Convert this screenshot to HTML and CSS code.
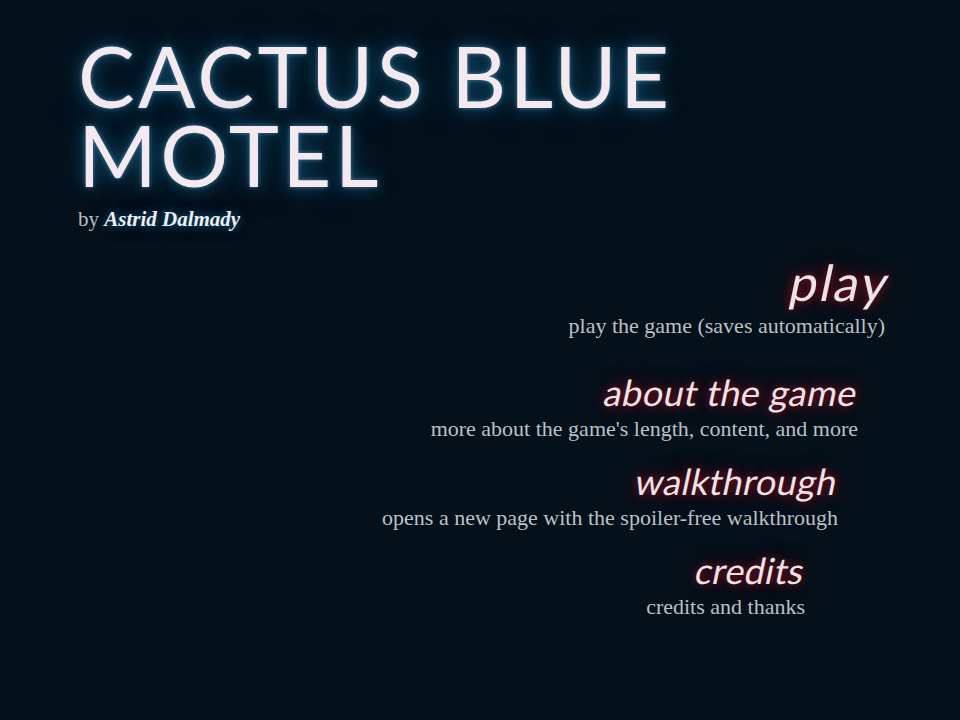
FILE: index.html
```html
<!DOCTYPE html>
<html lang="en">
<head>
<meta charset="utf-8">
<title>Cactus Blue Motel</title>
<link rel="stylesheet" href="styles.css">
</head>
<body>
<div class="page">
  <header class="masthead">
    <h1 class="title">CACTUS BLUE<br>MOTEL</h1>
    <p class="byline">by <em class="author">Astrid Dalmady</em></p>
  </header>
  <nav class="menu">
    <div class="item item-play">
      <a class="item-title title-big" href="#">play</a>
      <p class="item-desc">play the game (saves automatically)</p>
    </div>
    <div class="item item-about">
      <a class="item-title" href="#">about the game</a>
      <p class="item-desc">more about the game's length, content, and more</p>
    </div>
    <div class="item item-walk">
      <a class="item-title" href="#">walkthrough</a>
      <p class="item-desc">opens a new page with the spoiler-free walkthrough</p>
    </div>
    <div class="item item-credits">
      <a class="item-title" href="#">credits</a>
      <p class="item-desc">credits and thanks</p>
    </div>
  </nav>
</div>
</body>
</html>
```
FILE: styles.css
```css
html, body {
  margin: 0;
  padding: 0;
  background: #04101a;
}
.page {
  width: 960px;
  height: 720px;
  overflow: hidden;
  background: #04101a;
  font-family: "Liberation Serif", "DejaVu Serif", serif;
}
.masthead {
  padding: 36px 0 0 78px;
}
.title {
  margin: 0;
  font-family: "Lato", "Noto Sans", sans-serif;
  font-weight: 400;
  font-size: 85px;
  line-height: 79px;
  letter-spacing: 3.3px;
  color: #f4e9ee;
  text-shadow: 0 0 4px rgba(140, 210, 255, 0.45), 0 0 16px rgba(30, 120, 170, 0.6), 0 0 34px rgba(15, 95, 140, 0.55);
}
.byline {
  margin: 12px 0 0 0;
  font-size: 21px;
  line-height: 26px;
  color: #b9c0c6;
}
.author {
  color: #f2eef0;
  font-weight: 700;
  text-shadow: 0 0 8px rgba(40, 130, 180, 0.6), 0 0 16px rgba(20, 100, 150, 0.5);
}
.menu {
  display: flex;
  flex-direction: column;
  align-items: flex-end;
  margin-top: 23px;
}
.item {
  display: flex;
  flex-direction: column;
  align-items: flex-end;
}
.item-title {
  display: inline-block;
  transform: skewX(-12deg);
  font-family: "Lato", "Noto Sans", sans-serif;
  font-weight: 400;
  font-size: 36px;
  line-height: 40px;
  letter-spacing: 0.4px;
  color: #ebe4e7;
  text-decoration: none;
  text-shadow: 0 0 8px rgba(150, 15, 35, 0.95), 0 0 22px rgba(110, 8, 25, 0.85);
}
.title-big {
  font-size: 50px;
  line-height: 54px;
  letter-spacing: 2.4px;
  transform: translateX(5px) skewX(-12deg);
}
.item-desc {
  margin: 4px 0 0 0;
  font-size: 22px;
  line-height: 26px;
  color: #bcc1c6;
}
.item-play { margin-right: 75px; }
.item-about { margin-right: 102px; margin-top: 33px; }
.item-walk { margin-right: 122px; margin-top: 19px; }
.item-credits { margin-right: 155px; margin-top: 19px; }
```
